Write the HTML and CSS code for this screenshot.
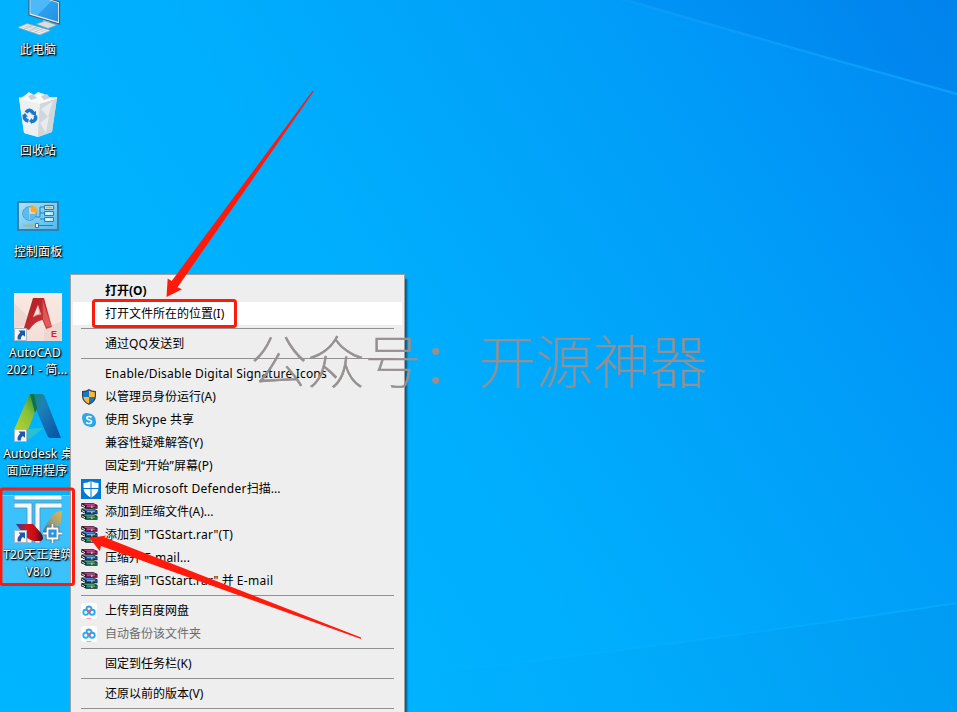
FILE: index.html
```html
<!DOCTYPE html>
<html lang="zh-CN">
<head>
<meta charset="utf-8">
<title>桌面</title>
<link rel="stylesheet" href="styles.css">
</head>
<body>
<svg class="defs" width="0" height="0" aria-hidden="true">
  <defs>
    <linearGradient id="screen" x1="0" y1="0" x2="1" y2="1"><stop offset="0" stop-color="#4fb9f7"/><stop offset=".5" stop-color="#4db8f8"/><stop offset=".52" stop-color="#2ba0ee"/><stop offset="1" stop-color="#2491e2"/></linearGradient>
    <linearGradient id="panel" x1="0" y1="0" x2="1" y2="1"><stop offset="0" stop-color="#a9e2fa"/><stop offset="1" stop-color="#4fbbee"/></linearGradient>
    <linearGradient id="cadbg" x1="0" y1="0" x2="0" y2="1"><stop offset="0" stop-color="#f8e9e2"/><stop offset="1" stop-color="#f3dfd8"/></linearGradient>
    <linearGradient id="cadred" x1="0" y1="0" x2="1" y2="1"><stop offset="0" stop-color="#a91e24"/><stop offset=".6" stop-color="#c92a31"/><stop offset="1" stop-color="#d8474b"/></linearGradient>
    <linearGradient id="adgreen" x1="0" y1="1" x2="1" y2="0"><stop offset="0" stop-color="#b8d232"/><stop offset=".5" stop-color="#88c038"/><stop offset="1" stop-color="#0d7c49"/></linearGradient>
    <linearGradient id="adblue" x1="0" y1="0" x2="1" y2="1"><stop offset="0" stop-color="#1c8579"/><stop offset=".35" stop-color="#1b82b8"/><stop offset="1" stop-color="#064fa6"/></linearGradient>
    <linearGradient id="tred" x1="0" y1="0" x2="1" y2="0"><stop offset="0" stop-color="#21439c"/><stop offset=".4" stop-color="#d8131c"/><stop offset=".7" stop-color="#c60d17"/><stop offset="1" stop-color="#420e28"/></linearGradient>
    <linearGradient id="tgold" x1="0" y1="1" x2="1" y2="0"><stop offset="0" stop-color="#2476cf"/><stop offset=".5" stop-color="#9da07a"/><stop offset="1" stop-color="#e9b642"/></linearGradient>
    <symbol id="shortcut" viewBox="0 0 13 13"><path fill="#f7f7f7" stroke="#a9b7c3" d="M.5.5h12v12H.5z"/><path fill="#1c5aa8" d="M4.500 2.500H11v6.300L8.900 6.900C7.200 8.200 6.700 9.500 6.900 11.600H3.700C3 8.600 4.100 6.300 6.400 4.600z"/></symbol>
    <symbol id="rar" viewBox="0 0 17 17">
      <g id="book"><path fill="#1a1a1a" d="M.5 0H12l4.500 2v3.700H5L0 3.200z"/><path fill="#fff" d="m1 1.500 3 1.700v1L1 2.600z"/><path fill="#fff" d="m.500 3.500 3.500 1.800v.8L.5 4.400z"/></g>
      <use href="#book" y="5.500"/><use href="#book" y="11"/>
      <path fill="#c03a92" d="M1.500.5H12l3.500 1.700H5z"/><path fill="#8e1163" d="M5 2.700h11v2.200H5z"/>
      <path fill="#4488dc" d="M1.500 6H12l3.500 1.700H5z"/><path fill="#1650a8" d="M5 8.200h11v2.200H5z"/>
      <path fill="#3ca787" d="M1.500 11.500H12l3.500 1.700H5z"/><path fill="#067a50" d="M5 13.700h11v2.200H5z"/>
      <path fill="#e3a0cc" d="M6 2.700h8v.7H6z"/><path fill="#a6cdf5" d="M6 8.200h8v.7H6z"/><path fill="#9fdcc6" d="M6 13.700h8v.7H6z"/>
      <path fill="#d9b93b" d="M10 2.700h1.600v2.200H10zM10 8.200h1.600v2.200H10zM10 13.700h1.600v2.200H10z"/>
    </symbol>
    <symbol id="baidu" viewBox="0 0 16 16"><rect width="16" height="16" rx="3" fill="#fff"/><g fill="none" stroke-width="1.900"><circle cx="4.800" cy="9.300" r="2.500" stroke="#22b5f5"/><circle cx="11.200" cy="9.300" r="2.500" stroke="#22a8f4"/><path stroke="#3aa0ed" d="M5.500 6.500V6a2.500 2.500 0 0 1 5 0v.5"/><path stroke="#ee5870" d="M6 7.200 8 8.800l2-1.600"/></g><path stroke="#f29aa4" d="M5.500 15.400h5"/></symbol>
  </defs>
</svg>

<main class="desktop">
  <svg class="wallpaper" viewBox="0 0 957 712" aria-hidden="true">
    <defs>
      <linearGradient id="beam" x1="0" y1="0" x2="1" y2="0"><stop offset="0" stop-color="#1ba8ff" stop-opacity=".35"/><stop offset="1" stop-color="#0aa2ff" stop-opacity=".9"/></linearGradient>
      <linearGradient id="floor" x1="0" y1="0" x2="1" y2="0"><stop offset="0" stop-color="#0088dc" stop-opacity="0"/><stop offset="1" stop-color="#0088dc" stop-opacity=".16"/></linearGradient>
      <linearGradient id="glow" x1="0" y1="0" x2="1" y2="0"><stop offset="0" stop-color="#0cb8ff" stop-opacity="0"/><stop offset="1" stop-color="#06acff" stop-opacity=".7"/></linearGradient>
    </defs>
    <path fill="#0068dc" opacity=".13" d="M622 0Q770 43 957 95V0z"/>
    <path fill="none" stroke="url(#beam)" stroke-width="2.500" d="M622-1Q770 42 957 94"/>
    <path fill="url(#floor)" d="M400 677Q680 645 957 604v108H400z"/>
    <path fill="none" stroke="url(#glow)" stroke-width="2" d="M400 677Q680 645 957 603"/>
  </svg>

  <section class="icons">
    <div class="icon">
      <svg class="art" viewBox="0 0 48 48"><path fill="#e8edf0" stroke="#4b5e6c" stroke-width="1.200" d="M15 2 45.500 12v22L15 25z"/><path fill="url(#screen)" d="M16.300 3.800 44 13v18.800L16.300 23.600z"/><path fill="#bfc7cc" d="M29 30l7 2v5h-7z"/><path fill="#d9dee1" stroke="#8b979f" stroke-width=".6" d="m22 34 9-3 12 4-9 3.500z"/><path fill="#f1f3f4" stroke="#98a3aa" stroke-width=".7" d="m4 37.500 9-4 23.500 7L26 45z"/><path stroke="#b5bdc2" stroke-width=".7" d="m6.500 36.500 22 7.200M9 35.300l22 7.200M11 34.500l22 7M10 39l9-4M15 41l9-4M20 42.500l9-4"/></svg>
      <span class="label"><span>此电脑</span></span>
    </div>
    <div class="icon">
      <svg class="art" viewBox="0 0 48 48"><path fill="#dfe4e7" d="m5 7 38-1-5 35-14 5-14-4z"/><path fill="#f7f8f8" d="m10 5 5-4 5 3 4-3 6 2 5 3 7 3-17 4-20-5z"/><path fill="#c9d0d5" d="m14 5 5-2 4 4-6 2zM27 5l6-2 3 4-6 2z"/><path fill="#edf0f1" d="m5 7 21 5-2 34-14-4z"/><path fill="#d0d6da" d="m26 12 17-5-5 34-14 5z"/><path fill="#e7ebed" d="m27 18 12-8-5 16zM26 32l9-7-3 17z"/><path fill="none" stroke="#fafafa" stroke-width="1.300" d="m5 7 21 5 17-5"/><g fill="none" stroke="#1878cf" stroke-width="3.600"><path d="M12 21.500q3.500-5 7.500.8"/><path d="M21.500 24.500q1 6-4.500 6"/><path d="M14.500 30q-5-1-4-6"/></g><path fill="#1878cf" d="m17 23 5-3v5zM18 27v6l-3-3zM8 25l3-3 3 4z"/></svg>
      <span class="label"><span>回收站</span></span>
    </div>
    <div class="icon">
      <svg class="art" viewBox="0 0 48 48"><path fill="#337fae" d="M3 9h42v30H3z"/><path fill="url(#panel)" d="M5 11h38v26H5z"/><circle cx="15.500" cy="21.500" r="6.700" fill="#e9f8ff" stroke="#2682bd"/><path fill="#5fb9ee" d="M15.500 21.500V28a6.500 6.500 0 1 1 0-13z"/><path fill="#5fb9ee" d="M15.500 21.500H22a6.500 6.500 0 0 1-6.500 6.500z"/><path fill="#f9aa22" d="M16.500 20.500V13a7 7 0 0 1 7 7.500z"/><path fill="none" stroke="#247fb4" d="M22 25h4V15h4M26 21h4M26 27h4"/><g fill="#b7e7fa" stroke="#247fb4"><path d="M30.500 13.500h9v4h-9zM30.500 19.500h9v4h-9zM30.500 25.500h9v4h-9z"/></g><path stroke="#f9aa22" stroke-width="1.500" d="M32 15.500h6"/><path stroke="#fff" stroke-width="1.500" d="M32 21.500h4M32 27.500h4"/><path stroke="#e9a334" stroke-width="1.500" d="M9 33.500h12"/><path stroke="#247fb4" d="M24 33.500h15"/><path fill="#fff" stroke="#247fb4" d="M21.500 31.500h3v4h-3z"/></svg>
      <span class="label"><span>控制面板</span></span>
    </div>
    <div class="icon">
      <svg class="art" viewBox="0 0 48 48"><path fill="url(#cadbg)" d="M0 0h48v48H0z"/><path fill="#e4c9c0" d="m0 10 20 20L0 35zM30 36l18-8v20H30z" opacity=".4"/><path fill="url(#cadred)" d="M19 5h11l8 29-6 2-3.500-9Q21 28 15 37l-5-2zM24 12l-5 12q4-3 8-2.500z"/><path fill="#e67572" d="m24 12 3.500 10q-5 0-8.500 3l1-2q3-2.500 5-2zM28.500 6 37 33l-4.500 1-3.500-8z" opacity=".6"/><text class="cad-e" x="37" y="44">E</text><use href="#shortcut" y="35" width="13" height="13"/></svg>
      <span class="label"><span class="shift-l">AutoCAD</span><span class="shift-s">2021 - 简...</span></span>
    </div>
    <div class="icon">
      <svg class="art" viewBox="0 0 48 48"><path fill="url(#adgreen)" d="M14 3q1-3 5-3h9L14 36H0z"/><path fill="#29c1cf" d="M11 35 30 34 14 46z"/><path fill="url(#adblue)" d="M16 0h11q3 0 4 3l16 41H36q-2 0-3-3L17 4z"/><path fill="#0c7449" d="M16 0h4l3 14-2 5z"/><use href="#shortcut" y="35" width="13" height="13"/></svg>
      <span class="label"><span>Autodesk 桌</span><span class="shift-s">面应用程序</span></span>
    </div>
    <div class="icon selected">
      <svg class="art" viewBox="0 0 48 48"><path fill="#f4f9fd" stroke="#4c8fb8" stroke-width=".8" d="M0 0h48v5H0zM0 8h18v40h-5V13H0zM21 8h27v5H26v35h-5z"/><path fill="url(#tred)" d="M2 29h17l8 9q4 6 0 8h-7Q12 44 8 37z"/><path fill="url(#tgold)" d="M48 16q-8 0-13 9l-4 7q-5 9 2 4 10-3 14-9z"/><g fill="none" stroke="#53636f" stroke-width="3.500"><path d="M33.500 33.500h10v10h-10zM38.500 29v4M38.500 44v4M29 38.500h4M44 38.500h4"/></g><g fill="#2d91dc" stroke="#fff" stroke-width="1.800"><path d="M33.500 33.500h10v10h-10zM38.500 29v4M38.500 44v4M29 38.500h4M44 38.500h4"/></g><path fill="#fff" d="M37.500 37.500h2v2h-2z"/><use href="#shortcut" y="35" width="13" height="13"/></svg>
      <span class="label"><span>T20天正建筑</span><span>V8.0</span></span>
    </div>
  </section>

  <nav class="menu">
    <div class="item bold"><i class="slot"></i><span>打开(O)</span></div>
    <div class="item hover"><i class="slot"></i><span>打开文件所在的位置(I)</span></div>
    <hr>
    <div class="item"><i class="slot"></i><span>通过<span class="latin">QQ</span>发送到</span></div>
    <hr>
    <div class="item"><i class="slot"></i><span class="latin">Enable/Disable Digital Signature Icons</span></div>
    <div class="item"><i class="slot"><svg width="16" height="16" viewBox="0 0 16 16"><path fill="#344451" d="M8 0q3 2.200 7 2v5q0 6-7 9-7-3-7-9V2q4 .2 7-2z"/><path fill="#1477d0" d="M8 1.500V8H2.200V3.200Q5.500 3 8 1.500zM8 8h5.700Q13 12.500 8 14.600z"/><path fill="#fdb82b" d="M8 1.500q2.500 1.500 5.800 1.700V8H8zM2.200 8H8v6.600Q3 12.500 2.200 8z"/></svg></i><span>以管理员身份运行(A)</span></div>
    <div class="item"><i class="slot"><svg width="16" height="16" viewBox="0 0 16 16"><circle cx="5.500" cy="5.500" r="4.500" fill="#31a9e9"/><circle cx="10.500" cy="10.500" r="4.500" fill="#209fe3"/><circle cx="8" cy="8" r="6.500" fill="#2ca8e9"/><path fill="none" stroke="#fff" stroke-width="1.600" d="M10.600 5.400Q9.700 4.500 8 4.500q-2.300 0-2.300 1.600C5.700 8.300 10.500 7.400 10.500 9.700q0 1.800-2.500 1.800-1.800 0-2.800-1.100"/></svg></i><span>使用 <span class="latin wide">Skype</span> 共享</span></div>
    <div class="item"><i class="slot"></i><span>兼容性疑难解答(Y)</span></div>
    <div class="item"><i class="slot"></i><span>固定到<span class="latin">“</span>开始<span class="latin">”</span>屏幕(P)</span></div>
    <div class="item"><i class="slot"><svg width="20" height="20" viewBox="0 0 20 20"><path fill="#0078d7" d="M0 0h20v20H0z"/><path fill="#fff" d="M10 2q3 2 7.500 2v5q0 6-7.500 9.500Q2.500 15 2.500 9V4Q7 4 10 2z"/><path stroke="#0078d7" d="M10 2v16M2 9.500h16"/></svg></i><span>使用 <span class="latin wide">Microsoft Defender</span>扫描...</span></div>
    <div class="item"><i class="slot"><svg width="17" height="17"><use href="#rar"/></svg></i><span>添加到压缩文件(A)...</span></div>
    <div class="item"><i class="slot"><svg width="17" height="17"><use href="#rar"/></svg></i><span>添加到 <span class="latin">"TGStart.rar"(T)</span></span></div>
    <div class="item"><i class="slot"><svg width="17" height="17"><use href="#rar"/></svg></i><span>压缩并 <span class="latin">E-mail...</span></span></div>
    <div class="item"><i class="slot"><svg width="17" height="17"><use href="#rar"/></svg></i><span>压缩到 <span class="latin">"TGStart.rar"</span> 并 <span class="latin wide">E-mail</span></span></div>
    <hr>
    <div class="item"><i class="slot"><svg width="16" height="16"><use href="#baidu"/></svg></i><span>上传到百度网盘</span></div>
    <div class="item disabled"><i class="slot"><svg width="16" height="16"><use href="#baidu"/></svg></i><span>自动备份该文件夹</span></div>
    <hr>
    <div class="item"><i class="slot"></i><span>固定到任务栏(K)</span></div>
    <hr>
    <div class="item"><i class="slot"></i><span>还原以前的版本(V)</span></div>
    <hr>
  </nav>

  <div class="watermark">公众号：开源神器</div>

  <svg class="marks" viewBox="0 0 957 712" aria-hidden="true">
    <g fill="none" stroke="#ff1a0c" stroke-width="3"><rect x="93.500" y="300.500" width="142" height="26" rx="2"/><rect x="1" y="489" width="72.500" height="95.500" rx="2"/></g>
    <g fill="#ff1a0c"><path d="M314 91 177.500 287.300 182 289.300 166.500 297 167.700 278.500 171.700 281 312.500 91z"/><path d="M361 637.500 104.300 537.300 106.500 535.500 89.500 538 99.700 551 101 546 361 639z"/></g>
  </svg>
</main>
</body>
</html>
```
FILE: styles.css
```css
* { box-sizing: border-box; }

body {
  margin: 0;
  overflow: hidden;
  font: 12px/17px "Noto Sans", "Noto Sans CJK SC", sans-serif;
  color: #000;
}

.defs { position: absolute; }

.desktop {
  position: relative;
  width: 957px;
  height: 712px;
  overflow: hidden;
  background: linear-gradient(57deg, #00b5ff 0%, #00b4ff 25%, #00aefe 45%, #00a3f9 65%, #0097f8 82%, #0087f0 100%);
}

.wallpaper,
.marks {
  position: absolute;
  inset: 0;
  width: 957px;
  height: 712px;
}

.icons {
  position: relative;
  display: grid;
  grid-auto-rows: 101px;
  width: 76px;
  margin-top: -10px;
}

.icon {
  display: flex;
  flex-direction: column;
  align-items: center;
  gap: 3px;
}

.selected {
  height: 90px;
  background: rgba(180, 220, 245, .32);
  box-shadow: inset 0 0 0 1px rgba(200, 235, 255, .4);
}

.art { width: 48px; height: 48px; flex: none; }

.cad-e { font: bold 9px "Liberation Sans", sans-serif; fill: #d5222b; }

.label {
  display: flex;
  flex-direction: column;
  align-items: center;
  white-space: nowrap;
  letter-spacing: .15px;
  color: #fff;
  text-shadow: 1px 1px 1px #000, 1px 1px 2px rgba(0, 0, 0, .9), 0 0 2px rgba(0, 0, 0, .5);
}

.shift-l { margin-right: 6px; }
.shift-s { margin-right: 2px; }

.menu {
  position: absolute;
  left: 70px;
  top: 274px;
  width: 335px;
  height: 450px;
  padding: 4px 2px;
  border: 1px solid #a0a0a0;
  background: #eee;
  box-shadow: 3px 4px 2px -1px rgba(0, 0, 0, .5);
}

.item {
  display: flex;
  align-items: center;
  height: 23px;
  padding-left: 8px;
  white-space: nowrap;
}

.slot {
  display: flex;
  align-items: center;
  flex: none;
  width: 24px;
  height: 23px;
}

.latin { letter-spacing: .19px; }
.wide { letter-spacing: .3px; }
.bold { font-weight: 700; }
.hover { background: #fff; }
.disabled { color: #6d6d6d; }

hr {
  height: 1px;
  margin: 3px 8px;
  border: 0;
  background: #919191;
}

.watermark {
  position: absolute;
  left: 250px;
  top: 317px;
  font: 100 57.200px/82px "Noto Sans CJK SC", sans-serif;
  white-space: nowrap;
  color: #969090;
  -webkit-text-stroke: .7px #969090;
}
```
